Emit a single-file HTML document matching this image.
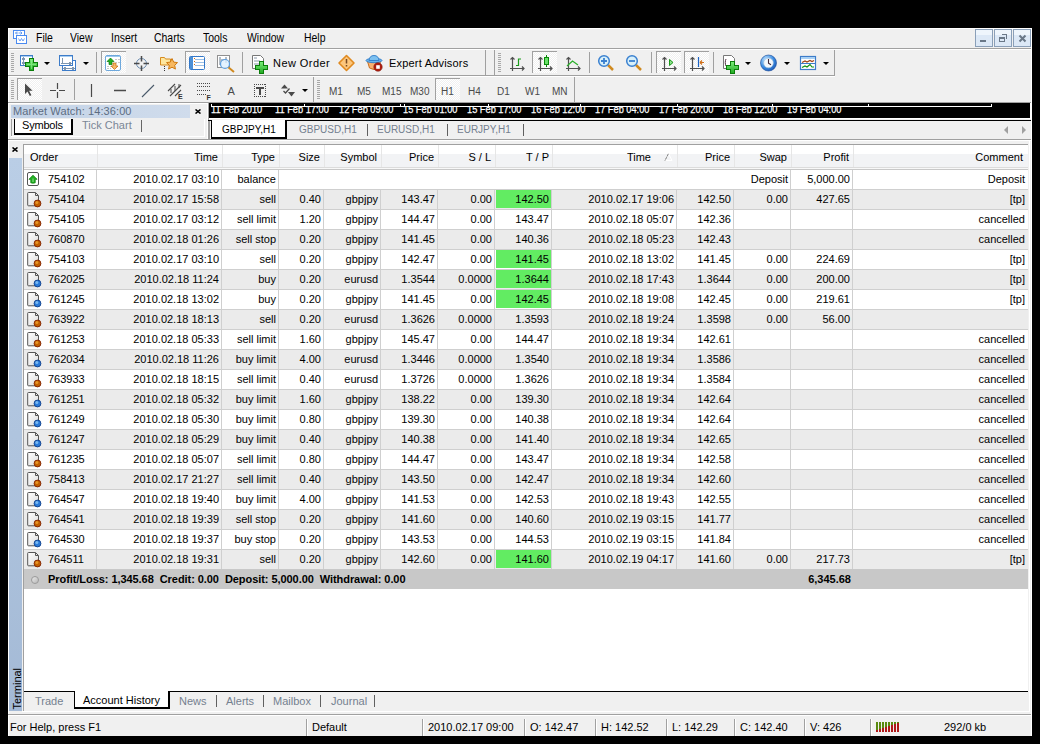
<!DOCTYPE html>
<html><head><meta charset="utf-8"><style>
*{margin:0;padding:0;box-sizing:border-box}
html,body{width:1040px;height:744px;overflow:hidden;background:#000}
body{position:relative;font-family:"Liberation Sans",sans-serif;font-size:11px;color:#000}
.a{position:absolute}
#win{position:absolute;left:8px;top:28px;width:1024px;height:708px;background:#f0f0f0}
.hl{position:absolute;height:1px}
.vline{position:absolute;width:1px}
.t{position:absolute;white-space:pre;line-height:13px}
.menu{top:28px;font-size:12px;line-height:20px;transform:scaleX(0.87);transform-origin:0 0}
.tb{position:absolute;border-right:1px solid #a0a0a0;border-bottom:1px solid #a0a0a0;}
.grip{position:absolute;width:4px;background:repeating-linear-gradient(#a8a8a8 0 1px,transparent 1px 2px)}
.sep{position:absolute;width:1px;background:#a0a0a0;border-right:1px solid #fff;width:2px}
.press{position:absolute;border:1px solid #b4b4b4;border-right-color:#fff;border-bottom-color:#fff;background:#f8f8f8}
.dd{position:absolute;width:0;height:0;border-left:3px solid transparent;border-right:3px solid transparent;border-top:3px solid #000}
.per{position:absolute;top:85px;color:#4a4a4a;white-space:pre;line-height:13px;font-size:10px}
#tbl{position:absolute;left:23px;top:144px;width:1005px;height:547px;background:#fff;border:1px solid #a0a0a0;border-right:none;border-bottom:none}
.hdr{position:absolute;left:0;top:0;width:1004px;height:25px;background:linear-gradient(#ffffff 0,#ffffff 9px,#f2f3f5 9px,#f2f3f5 22px,#dcdcdc 22px,#dcdcdc 23px,#f8f8f8 23px,#f8f8f8 24px,#c8c8c8 24px)}
.hc{position:absolute;top:0;height:22px;line-height:25px;text-align:right;padding-right:5px;white-space:pre}
.hs{border-left:1px solid #e6e6e6}
.sortar{display:inline-block;width:17px;padding-left:7px;vertical-align:-1px}
.row{position:absolute;left:0;width:1004px;height:20px;border-bottom:1px solid #cfcfcf}
.row.w{background:#fff}
.row.g{background:#ebebeb}
.c{position:absolute;top:0;height:19px;line-height:19px;text-align:right;white-space:pre}
.vl{position:absolute;top:0;width:1px;height:19px;background:#cfcfcf}
.grn{position:absolute;top:0;height:18px;background:#62ec62}
.ic{position:absolute;left:4px;top:2px;width:12px;height:14px}
.ic.up{border:1px solid #7a7a7a;border-radius:1px;background:#fff}
.ic.up svg{position:absolute;left:-1px;top:-1px}
.ic.doc{background:#fff;border:1px solid #6a6a6a;border-top-right-radius:3px}
.dot{position:absolute;left:6px;top:7px;width:8px;height:8px;border-radius:50%}
.sum{position:absolute;left:0;width:1004px;height:20px;background:#c8c8c8;font-weight:bold}
.st{position:absolute;top:0;line-height:20px;white-space:pre}
.sic{position:absolute;left:7px;top:7px;width:8px;height:8px;border:1px solid #9a9a9a;border-radius:50%;background:linear-gradient(135deg,#e8e8e8,#b8b8b8)}
.tl{position:absolute;top:0;color:#fff;-webkit-text-stroke:0.25px #fff;white-space:pre;font-size:11px;line-height:13px;transform:scaleX(0.84);transform-origin:0 0}

</style></head><body>
<div id="win"></div>
<svg class="a" style="left:0;top:0" width="1040" height="744" viewBox="0 0 1040 744">
<defs>
<pattern id="chk" width="2" height="2" patternUnits="userSpaceOnUse"><rect width="2" height="2" fill="#f0f0f0"/><rect width="1" height="1" fill="#fff"/><rect x="1" y="1" width="1" height="1" fill="#fff"/></pattern>
<linearGradient id="gplus" x1="0" y1="0" x2="0" y2="1"><stop offset="0" stop-color="#7df07d"/><stop offset="1" stop-color="#1fa81f"/></linearGradient>
<linearGradient id="mdib" x1="0" y1="0" x2="0" y2="1"><stop offset="0" stop-color="#eef5fc"/><stop offset="0.3" stop-color="#eef5fc"/><stop offset="0.31" stop-color="#dce8f6"/><stop offset="1" stop-color="#dce8f6"/></linearGradient>
<linearGradient id="mwg" x1="0" y1="0" x2="1" y2="0"><stop offset="0" stop-color="#c4d4e8"/><stop offset="1" stop-color="#d2deed"/></linearGradient>
</defs>
<!-- window top white line -->
<rect x="8" y="28" width="1024" height="1" fill="#fff"/>
<rect x="8" y="28" width="1" height="708" fill="#fff"/>
<!-- menu icon -->
<g fill="none" stroke="#4a8af0" stroke-width="1" shape-rendering="crispEdges">
<rect x="13.5" y="30.5" width="11" height="8" fill="#fff"/>
<rect x="16.5" y="35.5" width="10" height="8" fill="#fff"/>
<path d="M18.5 38.5 l1.5 2.5 l1.5 -2.5 l1.5 2.5 l1.5 -2.5" stroke-width="0.8" shape-rendering="auto"/>
<path d="M15.5 33 l1.5 -1.5 M15.5 33 l1.5 1.5 M15.5 33h3M22 33l-1.5 -1.5M22 33l-1.5 1.5M22 33h-3" stroke-width="0.8" shape-rendering="auto"/>
</g>
<!-- MDI buttons -->
<g shape-rendering="crispEdges">
<rect x="975.5" y="29.5" width="17" height="17" fill="url(#mdib)" stroke="#8a9fb8"/>
<rect x="994.5" y="29.5" width="17" height="17" fill="url(#mdib)" stroke="#8a9fb8"/>
<rect x="1013.5" y="29.5" width="17" height="17" fill="url(#mdib)" stroke="#8a9fb8"/>
<rect x="980" y="40" width="6" height="2" fill="#6a7888"/>
<rect x="999.5" y="37.5" width="5" height="4" fill="none" stroke="#6a7888"/>
<rect x="999" y="37" width="6" height="2" fill="#6a7888"/>
<path d="M1002 34.5 h4.5 v4" fill="none" stroke="#6a7888"/>
<rect x="1002" y="34" width="5" height="1" fill="#6a7888"/>
</g>
<path d="M1019.5 35.5 l6 6 M1025.5 35.5 l-6 6" stroke="#6a7888" stroke-width="2"/>
<!-- pressed buttons -->
<g shape-rendering="crispEdges">
<rect x="101" y="51" width="25" height="22" fill="url(#chk)"/>
<path d="M101.5 73 V51.5 H126" stroke="#a0a0a0" fill="none"/>
<rect x="185" y="51" width="25" height="22" fill="url(#chk)"/>
<path d="M185.5 73 V51.5 H210" stroke="#a0a0a0" fill="none"/>
<rect x="532" y="51" width="25" height="22" fill="url(#chk)"/>
<path d="M532.5 73 V51.5 H557" stroke="#a0a0a0" fill="none"/>
<rect x="656" y="51" width="25" height="22" fill="url(#chk)"/>
<path d="M656.5 73 V51.5 H681" stroke="#a0a0a0" fill="none"/>
<rect x="684" y="51" width="25" height="22" fill="url(#chk)"/>
<path d="M684.5 73 V51.5 H709" stroke="#a0a0a0" fill="none"/>
<rect x="17" y="78" width="25" height="22" fill="url(#chk)"/>
<path d="M17.5 100 V78.5 H42" stroke="#a0a0a0" fill="none"/>
<rect x="435" y="78" width="25" height="22" fill="url(#chk)"/>
<path d="M435.5 100 V78.5 H460" stroke="#a0a0a0" fill="none"/>
</g>
<!-- separators tb1 -->
<g fill="#a0a0a0" shape-rendering="crispEdges">
<rect x="96" y="52" width="1" height="21"/><rect x="242" y="52" width="1" height="21"/>
<rect x="589" y="52" width="1" height="21"/><rect x="651" y="52" width="1" height="21"/><rect x="713" y="52" width="1" height="21"/>
<rect x="74" y="79" width="1" height="21"/>
</g>
<!-- grippers -->
<g fill="#a8a8a8" shape-rendering="crispEdges">
<path d="M11 53h3v1h-3zM11 55h3v1h-3zM11 57h3v1h-3zM11 59h3v1h-3zM11 61h3v1h-3zM11 63h3v1h-3zM11 65h3v1h-3zM11 67h3v1h-3zM11 69h3v1h-3zM11 71h3v1h-3z"/>
<path d="M498 53h3v1h-3zM498 55h3v1h-3zM498 57h3v1h-3zM498 59h3v1h-3zM498 61h3v1h-3zM498 63h3v1h-3zM498 65h3v1h-3zM498 67h3v1h-3zM498 69h3v1h-3zM498 71h3v1h-3z"/>
<path d="M11 80h3v1h-3zM11 82h3v1h-3zM11 84h3v1h-3zM11 86h3v1h-3zM11 88h3v1h-3zM11 90h3v1h-3zM11 92h3v1h-3zM11 94h3v1h-3zM11 96h3v1h-3zM11 98h3v1h-3z"/>
<path d="M317 80h3v1h-3zM317 82h3v1h-3zM317 84h3v1h-3zM317 86h3v1h-3zM317 88h3v1h-3zM317 90h3v1h-3zM317 92h3v1h-3zM317 94h3v1h-3zM317 96h3v1h-3zM317 98h3v1h-3z"/>
</g>
<!-- dropdown arrows -->
<g fill="#000">
<path d="M44 62h6l-3 3z"/><path d="M83 62h6l-3 3z"/><path d="M745 62h6l-3 3z"/><path d="M784 62h6l-3 3z"/><path d="M823 62h6l-3 3z"/><path d="M302 89h6l-3 3z"/>
</g>
<!-- icon: new chart -->
<g shape-rendering="crispEdges">
<rect x="20.5" y="55.5" width="12" height="10" fill="#fff" stroke="#3d7cc9"/>
<rect x="21" y="56" width="11" height="1" fill="#a8cdf0"/>
<path d="M23.5 58v6M22 59.5l1.5 -1.5 1.5 1.5M22 62.5l1.5 1.5 1.5 -1.5" stroke="#7f97b0" fill="none"/>
</g>
<path d="M29.5 58.5h4v4h4v4h-4v4h-4v-4h-4v-4h4z" fill="url(#gplus)" stroke="#0a7d0a" shape-rendering="crispEdges"/><path d="M31.5 60v9M27 64.5h9" stroke="#9af59a" stroke-width="1" opacity="0.6"/>
<!-- icon: profiles -->
<g shape-rendering="crispEdges">
<rect x="62.5" y="60.5" width="13" height="10" fill="#fff" stroke="#3d7cc9"/>
<rect x="59.5" y="55.5" width="13" height="10" fill="#fff" stroke="#3d7cc9"/>
<rect x="60" y="56" width="12" height="1" fill="#a8cdf0"/>
<path d="M61 63.5h10M62.5 58v5M64 68.5h10M69.5 62l1.5 1.5 -1.5 1.5M65.5 67l-1.5 1.5 1.5 1.5M72.5 67l1.5 1.5 -1.5 1.5" stroke="#7f97b0" fill="none"/>
</g>
<!-- icon: market watch -->
<rect x="105.5" y="55.5" width="15" height="15" rx="1.5" fill="#fff" stroke="#6ea8dc"/>
<rect x="106" y="56" width="14" height="1" fill="#9cc8ee"/>
<path d="M110.5 58l3.5 3.5h-2v3h-3v-3h-2z" fill="#22b022" stroke="#0a7a0a" stroke-width="0.7"/>
<path d="M114.5 69.5l3.5 -3.5h-2v-3h-3v3h-2z" fill="#f6b866" stroke="#c0680a" stroke-width="0.7"/>
<path d="M115 59.5h5M115 62.5h5M107 66.5h4M107 68.5h4" stroke="#c8c8c8" stroke-width="1" stroke-dasharray="2 1"/>
<!-- crosshair -->
<circle cx="141.5" cy="63.5" r="5" fill="none" stroke="#6d8db0" stroke-width="1"/>
<path d="M134 63.5h5.5M143.5 63.5h5.5M141.5 56v5.5M141.5 65.5v5.5" stroke="#4a4a4a" stroke-width="1.5"/>
<!-- folder star -->
<path d="M160.5 57.5h4l1 1.5h5v6h-10z" fill="#fde7a0" stroke="#d68a1e"/>
<path d="M172 58.5l1.7 3.6 3.8 .5 -2.8 2.7 .7 3.8 -3.4 -1.9 -3.4 1.9 .7 -3.8 -2.8 -2.7 3.8 -.5z" fill="#f7b860" stroke="#d07a10"/>
<path d="M164.5 66v1M164.5 68v1M164.5 70v1" stroke="#333"/>
<!-- terminal icon -->
<rect x="189.5" y="56.5" width="15" height="13" rx="1" fill="#fff" stroke="#3478c8"/>
<rect x="190" y="57" width="3" height="12" fill="#4d90d6"/>
<path d="M195 59.5h9M195 62.5h9M195 65.5h9" stroke="#9cc0e6"/>
<path d="M194 58.5h1M194 61.5h1M194 64.5h1" stroke="#d06a10"/>
<!-- tester -->
<rect x="217.5" y="55.5" width="12" height="12" fill="#fff" stroke="#909090"/>
<path d="M220 57v8M221 60h3M226 57v6" stroke="#6a7a8a"/>
<path d="M228 67l6 5" stroke="#d08a20" stroke-width="2"/>
<circle cx="225" cy="64" r="4.5" fill="#dcefff" fill-opacity="0.8" stroke="#5a9ee0" stroke-width="1.2"/>
<!-- new order -->
<path d="M252.5 55.5h8l3 3v10h-11z" fill="#fff" stroke="#777"/>
<path d="M254 58h3M254 61h6M254 64h6" stroke="#8a98a8"/>
<path d="M259.5 61.5h4v4h4v4h-4v4h-4v-4h-4v-4h4z" fill="url(#gplus)" stroke="#0a7d0a" shape-rendering="crispEdges"/>
<!-- warning diamond -->
<path d="M346.5 55.5l7.5 7.5 -7.5 7.5 -7.5 -7.5z" fill="#fcc67c" stroke="#e08a20" stroke-width="1.6" stroke-linejoin="round"/>
<path d="M346.5 59v4.5M346.5 65v1.5" stroke="#7a4a20" stroke-width="1.5"/>
<!-- expert advisors -->
<path d="M367.5 61.5h13l-2 6.5q-4.5 3 -9 0z" fill="#f8b070" stroke="#c87020"/>
<ellipse cx="374" cy="60.5" rx="8" ry="2.2" fill="#6ab4ec" stroke="#2f7cc8" stroke-width="0.9"/>
<path d="M369 60.5q0.5 -5 5 -5 q4.5 0 5 5z" fill="#7cc0f0" stroke="#2f7cc8" stroke-width="0.9"/>
<circle cx="378" cy="67" r="4.2" fill="#b02010" stroke="#801008" stroke-width="0.6"/>
<rect x="376.2" y="65.2" width="3.6" height="3.6" fill="#fff"/>
<!-- bar chart -->
<g fill="none" stroke="#505050" stroke-width="1.2"><path d="M512.5 57.5V71M510 68.5H524"/><path d="M510.5 59.5l2 -2 2 2M522 66.5l2 2 -2 2"/><path d="M540.5 57.5V71M538 68.5H552"/><path d="M538.5 59.5l2 -2 2 2M550 66.5l2 2 -2 2"/><path d="M568.5 57.5V71M566 68.5H580"/><path d="M566.5 59.5l2 -2 2 2M578 66.5l2 2 -2 2"/><path d="M664.5 57.5V71M662 68.5H676"/><path d="M662.5 59.5l2 -2 2 2M674 66.5l2 2 -2 2"/><path d="M692.5 57.5V71M690 68.5H704"/><path d="M690.5 59.5l2 -2 2 2M702 66.5l2 2 -2 2"/></g>
<path d="M518.5 58.5v7.5M518.5 59h2.5M516 65.5h2.5" stroke="#1a9a1a" stroke-width="1.2" fill="none"/>
<rect x="544.5" y="57.5" width="4" height="7" fill="#6ae06a" stroke="#0a8a0a"/>
<path d="M546.5 55v2.5M546.5 64.5v2.5" stroke="#0a8a0a"/>
<path d="M567 66l5.5 -5 5.5 4" fill="none" stroke="#2ab02a" stroke-width="1.2"/>
<!-- zoom -->
<path d="M608 65l5 5" stroke="#d08a20" stroke-width="2.5"/>
<circle cx="604" cy="61" r="5.3" fill="#d8f0fa" stroke="#3a80d0" stroke-width="1.5"/>
<path d="M601 61h6M604 58v6" stroke="#3a80d0" stroke-width="1.8"/>
<path d="M636 65l5 5" stroke="#d08a20" stroke-width="2.5"/>
<circle cx="632" cy="61" r="5.3" fill="#d8f0fa" stroke="#3a80d0" stroke-width="1.5"/>
<path d="M629 61h6" stroke="#3a80d0" stroke-width="1.8"/>
<path d="M669.5 59.5l3.5 3 -3.5 3z" fill="#8ae08a" stroke="#1a9a1a"/>
<path d="M698.5 57v10" stroke="#1a64c8" stroke-width="1.2"/>
<path d="M700 62.5h4M700 62.5l2 -2M700 62.5l2 2" stroke="#d0701a" stroke-width="1.2"/>
<!-- indicators -->
<path d="M723.5 55.5h8l3 3v10h-11z" fill="#fff" stroke="#777"/>
<path d="M726 59c-1 2 -1 5 0 7" stroke="#503040" fill="none"/>
<path d="M730.5 61.5h4v4h4v4h-4v4h-4v-4h-4v-4h4z" fill="url(#gplus)" stroke="#0a7d0a" shape-rendering="crispEdges"/>
<!-- clock -->
<defs><radialGradient id="clk" cx="0.35" cy="0.3" r="0.8"><stop offset="0" stop-color="#bfe4ff"/><stop offset="0.6" stop-color="#3a8ae0"/><stop offset="1" stop-color="#1a54b0"/></radialGradient></defs>
<circle cx="768.5" cy="63" r="8" fill="url(#clk)" stroke="#1a4a98" stroke-width="0.6"/>
<circle cx="768.5" cy="63" r="4.8" fill="#f4f8fc" stroke="#a8c0d8" stroke-width="0.6"/>
<path d="M768.5 59v4.2l2.5 1.5" stroke="#402838" stroke-width="1.1" fill="none"/>
<!-- template -->
<rect x="800.5" y="56.5" width="15" height="13" fill="#fff" stroke="#3d7cc9" stroke-width="1.2"/>
<rect x="801" y="57" width="14" height="2" fill="#a8d0f4"/>
<path d="M801 63.5h14" stroke="#3d7cc9"/>
<path d="M802 62.5l3 -1.5 2 1 3 -1.5 2 1 2 -1" stroke="#a04010" stroke-width="1.2" fill="none"/>
<path d="M802 67.5l3 -1.5 2 1 3 -2.5 2 2.5 2 0" stroke="#109010" stroke-width="1.2" fill="none"/>
<!-- row2 tools -->
<path d="M25 83.5v10.5l2.5 -2.5 2.3 4.5 1.6 -.8 -2.3 -4.5h3.5z" fill="#4a4a4a"/>
<path d="M50 90.5h6M59 90.5h6M57.5 83v6M57.5 92v6" stroke="#4a4a4a" stroke-width="1.2"/>
<path d="M91.5 84v13" stroke="#4a4a4a" stroke-width="1.2"/>
<path d="M114 90.5h12" stroke="#4a4a4a" stroke-width="1.5"/>
<path d="M142 97l12 -12" stroke="#4a5a6a" stroke-width="1.1"/>
<path d="M168 91l7 -7M170 96l11 -11M175 96l6 -6" stroke="#4a4a4a" stroke-width="1.1"/>
<path d="M171 89v4M175 86v5M179 84v4" stroke="#4a4a4a" stroke-width="1"/>
<text x="178" y="99" font-family="Liberation Sans" font-size="7" font-weight="bold" fill="#333">E</text>
<g stroke="#4a4a4a" stroke-dasharray="1 1" stroke-width="1" shape-rendering="crispEdges">
<path d="M197 83.5h13M197 86.5h13M197 90.5h13M197 94.5h9"/>
<path d="M254 84.5h12M254 96.5h12M254.5 84v13M265.5 84v13"/>
</g>
<text x="206.5" y="99.5" font-family="Liberation Sans" font-size="7" font-weight="bold" fill="#333">F</text>
<text x="227.5" y="95" font-family="Liberation Sans" font-size="11" fill="#4a4a4a">A</text>
<path d="M256 88h8M260 88v7" stroke="#4a4a4a" stroke-width="2"/>
<path d="M281 88.5l3.5 -4 3.5 4z" fill="#4a4a4a"/>
<path d="M283.5 91l2 2 4 -4.5" fill="none" stroke="#4a4a4a" stroke-width="1.3"/>
<path d="M288 92h7l-3.5 4.5z" fill="#4a4a4a"/>
</svg>

<!-- menu bar -->
<div class="t menu" style="left:36px">File</div>
<div class="t menu" style="left:70px">View</div>
<div class="t menu" style="left:111px">Insert</div>
<div class="t menu" style="left:154px">Charts</div>
<div class="t menu" style="left:203px">Tools</div>
<div class="t menu" style="left:247px">Window</div>
<div class="t menu" style="left:304px">Help</div>
<div class="hl" style="left:8px;top:48px;width:1024px;background:#a0a0a0"></div>
<div class="hl" style="left:8px;top:49px;width:1024px;background:#fff"></div>
<!-- toolbar row 1 -->
<div class="hl" style="left:8px;top:75px;width:827px;background:#a0a0a0"></div>
<div class="hl" style="left:8px;top:76px;width:827px;background:#fff"></div>
<div class="vline" style="left:485px;top:50px;height:25px;background:#a0a0a0"></div>
<div class="vline" style="left:494px;top:50px;height:25px;background:#a0a0a0"></div>
<div class="vline" style="left:834px;top:50px;height:25px;background:#a0a0a0"></div>
<div class="t" style="left:273px;top:57px;letter-spacing:0.45px">New Order</div>
<div class="t" style="left:389px;top:57px;letter-spacing:0.2px">Expert Advisors</div>
<!-- toolbar row 2 -->
<div class="hl" style="left:8px;top:102px;width:1024px;background:#a0a0a0"></div>
<div class="vline" style="left:313px;top:77px;height:25px;background:#a0a0a0"></div>
<div class="vline" style="left:574px;top:77px;height:25px;background:#a0a0a0"></div>
<div class="per" style="left:329px">M1</div>
<div class="per" style="left:357px">M5</div>
<div class="per" style="left:382px">M15</div>
<div class="per" style="left:410px">M30</div>
<div class="per" style="left:441px">H1</div>
<div class="per" style="left:468px">H4</div>
<div class="per" style="left:497px">D1</div>
<div class="per" style="left:525px">W1</div>
<div class="per" style="left:552px">MN</div>
<!-- market watch -->
<div class="a" style="left:11px;top:105px;width:179px;height:13px;background:linear-gradient(90deg,#c3d3e7,#d0dcec)"></div>
<div class="t" style="left:13px;top:105px;letter-spacing:0.1px;color:#5d6d82">Market Watch: 14:36:00</div>
<div class="vline" style="left:11px;top:119px;height:17px;background:#a0a0a0"></div>
<div class="vline" style="left:204px;top:119px;height:17px;background:#fff"></div>
<div class="hl" style="left:11px;top:136px;width:194px;background:#fff"></div>
<div class="hl" style="left:8px;top:103px;width:200px;background:#fff"></div>
<div class="vline" style="left:207px;top:103px;height:36px;background:#fff"></div>
<div class="vline" style="left:208px;top:103px;height:36px;background:#a0a0a0"></div>
<svg class="a" style="left:195px;top:109px" width="6" height="5"><path d="M.5 .5l5 4M5.5 .5l-5 4" stroke="#000" stroke-width="1.6"/></svg>
<div class="a" style="left:14px;top:119px;width:59px;height:16px;background:#fff;border:1px solid #000;border-top:none;border-right-width:2px;border-bottom-width:2px"></div>
<div class="t" style="left:22px;top:119px;letter-spacing:-0.2px">Symbols</div>
<div class="t" style="left:82px;top:119px;color:#7a8696">Tick Chart</div>
<div class="vline" style="left:141px;top:120px;height:12px;background:#666"></div>
<!-- timeline -->
<div class="a" style="left:209px;top:103px;width:821px;height:15px;background:#000;overflow:hidden">
<div class="tl" style="left:2px">11 Feb 2010</div>
<div class="tl" style="left:66px">11 Feb 17:00</div>
<div class="tl" style="left:130px">12 Feb 09:00</div>
<div class="tl" style="left:194px">15 Feb 01:00</div>
<div class="tl" style="left:258px">15 Feb 17:00</div>
<div class="tl" style="left:322px">16 Feb 12:00</div>
<div class="tl" style="left:386px">17 Feb 04:00</div>
<div class="tl" style="left:450px">17 Feb 20:00</div>
<div class="tl" style="left:514px">18 Feb 12:00</div>
<div class="tl" style="left:578px">19 Feb 04:00</div>
<div class="a" style="left:0;top:0;width:821px;height:3px;background:#000"></div>
</div>
<div class="hl" style="left:211px;top:106px;width:781px;background:#fff"></div>
<svg class="a" style="left:0;top:0" width="1040" height="120"><g fill="#fff" shape-rendering="crispEdges">
<rect x="211" y="104" width="1" height="2"/><rect x="304" y="104" width="1" height="2"/><rect x="400" y="104" width="1" height="2"/><rect x="404" y="104" width="1" height="2"/><rect x="488" y="104" width="1" height="2"/><rect x="580" y="104" width="1" height="2"/><rect x="677" y="104" width="1" height="2"/><rect x="772" y="104" width="1" height="2"/><rect x="868" y="104" width="1" height="2"/><rect x="991" y="104" width="1" height="2"/>
</g></svg>
<div class="hl" style="left:209px;top:118px;width:822px;background:#fff"></div>
<div class="vline" style="left:1030px;top:103px;height:16px;background:#fff"></div>
<!-- chart tabs -->
<div class="hl" style="left:209px;top:119px;width:822px;background:#f0f0f0"></div>
<div class="hl" style="left:285px;top:120px;width:746px;background:#000"></div>
<div class="vline" style="left:209px;top:120px;height:19px;background:#a0a0a0"></div>
<div class="a" style="left:211px;top:120px;width:76px;height:19px;background:#fff;border:1px solid #000;border-top:none;border-left-width:1px;border-right-width:2px;border-bottom-width:2px"></div>
<div class="hl" style="left:208px;top:120px;width:4px;background:#000"></div>
<div class="t" style="left:222px;top:123px;font-size:10px">GBPJPY,H1</div>
<div class="t" style="left:299px;top:123px;font-size:10px;color:#74808f">GBPUSD,H1</div>
<div class="vline" style="left:367px;top:124px;height:12px;background:#606060"></div>
<div class="t" style="left:377px;top:123px;font-size:10px;color:#74808f">EURUSD,H1</div>
<div class="vline" style="left:447px;top:124px;height:12px;background:#606060"></div>
<div class="t" style="left:457px;top:123px;font-size:10px;color:#74808f">EURJPY,H1</div>
<div class="vline" style="left:523px;top:124px;height:12px;background:#606060"></div>
<svg class="a" style="left:1000px;top:124px" width="30" height="12"><path d="M8 2v8l-4 -4z" fill="#a0a0a0"/><path d="M22 2v8l4 -4z" fill="#a0a0a0"/></svg>
<div class="hl" style="left:8px;top:139px;width:1024px;background:#a0a0a0"></div>
<div class="hl" style="left:8px;top:140px;width:1024px;background:#fff"></div>
<!-- terminal -->
<svg class="a" style="left:12px;top:147px" width="6" height="5"><path d="M.5 .5l5 4M5.5 .5l-5 4" stroke="#000" stroke-width="1.6"/></svg>
<div class="a" style="left:9px;top:158px;width:13px;height:553px;background:linear-gradient(#bacee6,#a4bad6)"></div>
<div class="t" style="left:-4px;top:682px;width:42px;transform:rotate(-90deg);transform-origin:21px 6.5px;color:#000">Terminal</div>
<div id="tbl">
<div class="hdr">
<div class="hc" style="left:0px;width:73px;text-align:left"><span style="padding-left:6px">Order</span></div>
<div class="hc hs" style="left:73px;width:125px;padding-right:4px">Time</div>
<div class="hc hs" style="left:198px;width:57px;padding-right:4px">Type</div>
<div class="hc hs" style="left:255px;width:45px;padding-right:4px">Size</div>
<div class="hc hs" style="left:300px;width:57px;padding-right:4px">Symbol</div>
<div class="hc hs" style="left:357px;width:57px;padding-right:4px">Price</div>
<div class="hc hs" style="left:414px;width:57px;padding-right:4px">S / L</div>
<div class="hc hs" style="left:471px;width:57px;padding-right:3px">T / P</div>
<div class="hc hs" style="left:528px;width:125px;padding-right:26px">Time<svg class="a" style="left:111px;top:7px" width="10" height="9" viewBox="0 0 10 9"><path d="M1 8.5 L4.5 1.5 L8 8.5 Z" fill="none" stroke="#fff" stroke-width="1"/><path d="M1 8.5 L4.5 1.5" stroke="#555" stroke-width="1" stroke-dasharray="1 0.6"/></svg></div>
<div class="hc hs" style="left:653px;width:57px;padding-right:4px">Price</div>
<div class="hc hs" style="left:710px;width:57px;padding-right:4px">Swap</div>
<div class="hc hs" style="left:767px;width:62px;padding-right:4px">Profit</div>
<div class="hc hs" style="left:829px;width:176px;padding-right:6px">Comment</div>
</div>
<div class="row w" style="top:25px">
<svg class="a" style="left:3px;top:2px" width="13" height="15" viewBox="0 0 13 15"><rect x="0.5" y="0.5" width="11" height="13" rx="1.5" fill="#fff" stroke="#555"/><path d="M6 3.2 L10 7.3 L8.2 7.3 L8.2 10.8 Q6 11.6 3.8 10.8 L3.8 7.3 L2 7.3 Z" fill="#22b022" stroke="#0a800a" stroke-width="0.8"/><path d="M6 6.5v3.5" stroke="#8ee08e" stroke-width="1"/></svg>
<div class="c" style="left:24px;text-align:left">754102</div>
<div class="vl" style="left:72px"></div>
<div class="vl" style="left:197px"></div>
<div class="c" style="left:72px;width:123px">2010.02.17 03:10</div>
<div class="vl" style="left:254px"></div>
<div class="c" style="left:197px;width:55px">balance</div>
<div class="vl" style="left:766px"></div>
<div class="c" style="left:709px;width:55px">Deposit</div>
<div class="vl" style="left:828px"></div>
<div class="c" style="left:766px;width:60px">5,000.00</div>
<div class="c" style="left:828px;width:173px">Deposit</div>
</div>
<div class="row g" style="top:45px">
<svg class="a" style="left:3px;top:2px" width="15" height="16" viewBox="0 0 15 16"><defs><linearGradient id="dg" x1="0" y1="0" x2="1" y2="1"><stop offset="0" stop-color="#fff"/><stop offset="1" stop-color="#dcdcdc"/></linearGradient></defs><path d="M1.5 .5h7l3 3v9.5a.8 .8 0 0 1 -.8 .8h-9.2a.8 .8 0 0 1 -.8 -.8v-11.7a.8 .8 0 0 1 .8 -.8z" fill="url(#dg)" stroke="#555"/><path d="M8.5 .8v2.7h2.7" fill="none" stroke="#555"/><circle cx="10.5" cy="11.5" r="3.4" fill="#c06000" stroke="#802000" stroke-width="0.9"/><circle cx="9.8" cy="10.6" r="1.5" fill="#f0a030" opacity="0.8"/></svg>
<div class="c" style="left:24px;text-align:left">754104</div>
<div class="vl" style="left:72px"></div>
<div class="vl" style="left:197px"></div>
<div class="c" style="left:72px;width:123px">2010.02.17 15:58</div>
<div class="vl" style="left:254px"></div>
<div class="c" style="left:197px;width:55px">sell</div>
<div class="vl" style="left:299px"></div>
<div class="c" style="left:254px;width:43px">0.40</div>
<div class="vl" style="left:356px"></div>
<div class="c" style="left:299px;width:55px">gbpjpy</div>
<div class="vl" style="left:413px"></div>
<div class="c" style="left:356px;width:55px">143.47</div>
<div class="vl" style="left:470px"></div>
<div class="c" style="left:413px;width:55px">0.00</div>
<div class="grn" style="left:472px;width:55px"></div>
<div class="vl" style="left:527px"></div>
<div class="c" style="left:470px;width:55px">142.50</div>
<div class="vl" style="left:652px"></div>
<div class="c" style="left:527px;width:123px">2010.02.17 19:06</div>
<div class="vl" style="left:709px"></div>
<div class="c" style="left:652px;width:55px">142.50</div>
<div class="vl" style="left:766px"></div>
<div class="c" style="left:709px;width:55px">0.00</div>
<div class="vl" style="left:828px"></div>
<div class="c" style="left:766px;width:60px">427.65</div>
<div class="c" style="left:828px;width:173px">[tp]</div>
</div>
<div class="row w" style="top:65px">
<svg class="a" style="left:3px;top:2px" width="15" height="16" viewBox="0 0 15 16"><defs><linearGradient id="dg" x1="0" y1="0" x2="1" y2="1"><stop offset="0" stop-color="#fff"/><stop offset="1" stop-color="#dcdcdc"/></linearGradient></defs><path d="M1.5 .5h7l3 3v9.5a.8 .8 0 0 1 -.8 .8h-9.2a.8 .8 0 0 1 -.8 -.8v-11.7a.8 .8 0 0 1 .8 -.8z" fill="url(#dg)" stroke="#555"/><path d="M8.5 .8v2.7h2.7" fill="none" stroke="#555"/><circle cx="10.5" cy="11.5" r="3.4" fill="#c06000" stroke="#802000" stroke-width="0.9"/><circle cx="9.8" cy="10.6" r="1.5" fill="#f0a030" opacity="0.8"/></svg>
<div class="c" style="left:24px;text-align:left">754105</div>
<div class="vl" style="left:72px"></div>
<div class="vl" style="left:197px"></div>
<div class="c" style="left:72px;width:123px">2010.02.17 03:12</div>
<div class="vl" style="left:254px"></div>
<div class="c" style="left:197px;width:55px">sell limit</div>
<div class="vl" style="left:299px"></div>
<div class="c" style="left:254px;width:43px">1.20</div>
<div class="vl" style="left:356px"></div>
<div class="c" style="left:299px;width:55px">gbpjpy</div>
<div class="vl" style="left:413px"></div>
<div class="c" style="left:356px;width:55px">144.47</div>
<div class="vl" style="left:470px"></div>
<div class="c" style="left:413px;width:55px">0.00</div>
<div class="vl" style="left:527px"></div>
<div class="c" style="left:470px;width:55px">143.47</div>
<div class="vl" style="left:652px"></div>
<div class="c" style="left:527px;width:123px">2010.02.18 05:07</div>
<div class="vl" style="left:709px"></div>
<div class="c" style="left:652px;width:55px">142.36</div>
<div class="vl" style="left:766px"></div>
<div class="vl" style="left:828px"></div>
<div class="c" style="left:828px;width:173px">cancelled</div>
</div>
<div class="row g" style="top:85px">
<svg class="a" style="left:3px;top:2px" width="15" height="16" viewBox="0 0 15 16"><defs><linearGradient id="dg" x1="0" y1="0" x2="1" y2="1"><stop offset="0" stop-color="#fff"/><stop offset="1" stop-color="#dcdcdc"/></linearGradient></defs><path d="M1.5 .5h7l3 3v9.5a.8 .8 0 0 1 -.8 .8h-9.2a.8 .8 0 0 1 -.8 -.8v-11.7a.8 .8 0 0 1 .8 -.8z" fill="url(#dg)" stroke="#555"/><path d="M8.5 .8v2.7h2.7" fill="none" stroke="#555"/><circle cx="10.5" cy="11.5" r="3.4" fill="#c06000" stroke="#802000" stroke-width="0.9"/><circle cx="9.8" cy="10.6" r="1.5" fill="#f0a030" opacity="0.8"/></svg>
<div class="c" style="left:24px;text-align:left">760870</div>
<div class="vl" style="left:72px"></div>
<div class="vl" style="left:197px"></div>
<div class="c" style="left:72px;width:123px">2010.02.18 01:26</div>
<div class="vl" style="left:254px"></div>
<div class="c" style="left:197px;width:55px">sell stop</div>
<div class="vl" style="left:299px"></div>
<div class="c" style="left:254px;width:43px">0.20</div>
<div class="vl" style="left:356px"></div>
<div class="c" style="left:299px;width:55px">gbpjpy</div>
<div class="vl" style="left:413px"></div>
<div class="c" style="left:356px;width:55px">141.45</div>
<div class="vl" style="left:470px"></div>
<div class="c" style="left:413px;width:55px">0.00</div>
<div class="vl" style="left:527px"></div>
<div class="c" style="left:470px;width:55px">140.36</div>
<div class="vl" style="left:652px"></div>
<div class="c" style="left:527px;width:123px">2010.02.18 05:23</div>
<div class="vl" style="left:709px"></div>
<div class="c" style="left:652px;width:55px">142.43</div>
<div class="vl" style="left:766px"></div>
<div class="vl" style="left:828px"></div>
<div class="c" style="left:828px;width:173px">cancelled</div>
</div>
<div class="row w" style="top:105px">
<svg class="a" style="left:3px;top:2px" width="15" height="16" viewBox="0 0 15 16"><defs><linearGradient id="dg" x1="0" y1="0" x2="1" y2="1"><stop offset="0" stop-color="#fff"/><stop offset="1" stop-color="#dcdcdc"/></linearGradient></defs><path d="M1.5 .5h7l3 3v9.5a.8 .8 0 0 1 -.8 .8h-9.2a.8 .8 0 0 1 -.8 -.8v-11.7a.8 .8 0 0 1 .8 -.8z" fill="url(#dg)" stroke="#555"/><path d="M8.5 .8v2.7h2.7" fill="none" stroke="#555"/><circle cx="10.5" cy="11.5" r="3.4" fill="#c06000" stroke="#802000" stroke-width="0.9"/><circle cx="9.8" cy="10.6" r="1.5" fill="#f0a030" opacity="0.8"/></svg>
<div class="c" style="left:24px;text-align:left">754103</div>
<div class="vl" style="left:72px"></div>
<div class="vl" style="left:197px"></div>
<div class="c" style="left:72px;width:123px">2010.02.17 03:10</div>
<div class="vl" style="left:254px"></div>
<div class="c" style="left:197px;width:55px">sell</div>
<div class="vl" style="left:299px"></div>
<div class="c" style="left:254px;width:43px">0.20</div>
<div class="vl" style="left:356px"></div>
<div class="c" style="left:299px;width:55px">gbpjpy</div>
<div class="vl" style="left:413px"></div>
<div class="c" style="left:356px;width:55px">142.47</div>
<div class="vl" style="left:470px"></div>
<div class="c" style="left:413px;width:55px">0.00</div>
<div class="grn" style="left:472px;width:55px"></div>
<div class="vl" style="left:527px"></div>
<div class="c" style="left:470px;width:55px">141.45</div>
<div class="vl" style="left:652px"></div>
<div class="c" style="left:527px;width:123px">2010.02.18 13:02</div>
<div class="vl" style="left:709px"></div>
<div class="c" style="left:652px;width:55px">141.45</div>
<div class="vl" style="left:766px"></div>
<div class="c" style="left:709px;width:55px">0.00</div>
<div class="vl" style="left:828px"></div>
<div class="c" style="left:766px;width:60px">224.69</div>
<div class="c" style="left:828px;width:173px">[tp]</div>
</div>
<div class="row g" style="top:125px">
<svg class="a" style="left:3px;top:2px" width="15" height="16" viewBox="0 0 15 16"><defs><linearGradient id="dg" x1="0" y1="0" x2="1" y2="1"><stop offset="0" stop-color="#fff"/><stop offset="1" stop-color="#dcdcdc"/></linearGradient></defs><path d="M1.5 .5h7l3 3v9.5a.8 .8 0 0 1 -.8 .8h-9.2a.8 .8 0 0 1 -.8 -.8v-11.7a.8 .8 0 0 1 .8 -.8z" fill="url(#dg)" stroke="#555"/><path d="M8.5 .8v2.7h2.7" fill="none" stroke="#555"/><circle cx="10.5" cy="11.5" r="3.4" fill="#2a7ad8" stroke="#10408a" stroke-width="0.9"/><circle cx="9.8" cy="10.6" r="1.5" fill="#8cc8f8" opacity="0.8"/></svg>
<div class="c" style="left:24px;text-align:left">762025</div>
<div class="vl" style="left:72px"></div>
<div class="vl" style="left:197px"></div>
<div class="c" style="left:72px;width:123px">2010.02.18 11:24</div>
<div class="vl" style="left:254px"></div>
<div class="c" style="left:197px;width:55px">buy</div>
<div class="vl" style="left:299px"></div>
<div class="c" style="left:254px;width:43px">0.20</div>
<div class="vl" style="left:356px"></div>
<div class="c" style="left:299px;width:55px">eurusd</div>
<div class="vl" style="left:413px"></div>
<div class="c" style="left:356px;width:55px">1.3544</div>
<div class="vl" style="left:470px"></div>
<div class="c" style="left:413px;width:55px">0.0000</div>
<div class="grn" style="left:472px;width:55px"></div>
<div class="vl" style="left:527px"></div>
<div class="c" style="left:470px;width:55px">1.3644</div>
<div class="vl" style="left:652px"></div>
<div class="c" style="left:527px;width:123px">2010.02.18 17:43</div>
<div class="vl" style="left:709px"></div>
<div class="c" style="left:652px;width:55px">1.3644</div>
<div class="vl" style="left:766px"></div>
<div class="c" style="left:709px;width:55px">0.00</div>
<div class="vl" style="left:828px"></div>
<div class="c" style="left:766px;width:60px">200.00</div>
<div class="c" style="left:828px;width:173px">[tp]</div>
</div>
<div class="row w" style="top:145px">
<svg class="a" style="left:3px;top:2px" width="15" height="16" viewBox="0 0 15 16"><defs><linearGradient id="dg" x1="0" y1="0" x2="1" y2="1"><stop offset="0" stop-color="#fff"/><stop offset="1" stop-color="#dcdcdc"/></linearGradient></defs><path d="M1.5 .5h7l3 3v9.5a.8 .8 0 0 1 -.8 .8h-9.2a.8 .8 0 0 1 -.8 -.8v-11.7a.8 .8 0 0 1 .8 -.8z" fill="url(#dg)" stroke="#555"/><path d="M8.5 .8v2.7h2.7" fill="none" stroke="#555"/><circle cx="10.5" cy="11.5" r="3.4" fill="#2a7ad8" stroke="#10408a" stroke-width="0.9"/><circle cx="9.8" cy="10.6" r="1.5" fill="#8cc8f8" opacity="0.8"/></svg>
<div class="c" style="left:24px;text-align:left">761245</div>
<div class="vl" style="left:72px"></div>
<div class="vl" style="left:197px"></div>
<div class="c" style="left:72px;width:123px">2010.02.18 13:02</div>
<div class="vl" style="left:254px"></div>
<div class="c" style="left:197px;width:55px">buy</div>
<div class="vl" style="left:299px"></div>
<div class="c" style="left:254px;width:43px">0.20</div>
<div class="vl" style="left:356px"></div>
<div class="c" style="left:299px;width:55px">gbpjpy</div>
<div class="vl" style="left:413px"></div>
<div class="c" style="left:356px;width:55px">141.45</div>
<div class="vl" style="left:470px"></div>
<div class="c" style="left:413px;width:55px">0.00</div>
<div class="grn" style="left:472px;width:55px"></div>
<div class="vl" style="left:527px"></div>
<div class="c" style="left:470px;width:55px">142.45</div>
<div class="vl" style="left:652px"></div>
<div class="c" style="left:527px;width:123px">2010.02.18 19:08</div>
<div class="vl" style="left:709px"></div>
<div class="c" style="left:652px;width:55px">142.45</div>
<div class="vl" style="left:766px"></div>
<div class="c" style="left:709px;width:55px">0.00</div>
<div class="vl" style="left:828px"></div>
<div class="c" style="left:766px;width:60px">219.61</div>
<div class="c" style="left:828px;width:173px">[tp]</div>
</div>
<div class="row g" style="top:165px">
<svg class="a" style="left:3px;top:2px" width="15" height="16" viewBox="0 0 15 16"><defs><linearGradient id="dg" x1="0" y1="0" x2="1" y2="1"><stop offset="0" stop-color="#fff"/><stop offset="1" stop-color="#dcdcdc"/></linearGradient></defs><path d="M1.5 .5h7l3 3v9.5a.8 .8 0 0 1 -.8 .8h-9.2a.8 .8 0 0 1 -.8 -.8v-11.7a.8 .8 0 0 1 .8 -.8z" fill="url(#dg)" stroke="#555"/><path d="M8.5 .8v2.7h2.7" fill="none" stroke="#555"/><circle cx="10.5" cy="11.5" r="3.4" fill="#c06000" stroke="#802000" stroke-width="0.9"/><circle cx="9.8" cy="10.6" r="1.5" fill="#f0a030" opacity="0.8"/></svg>
<div class="c" style="left:24px;text-align:left">763922</div>
<div class="vl" style="left:72px"></div>
<div class="vl" style="left:197px"></div>
<div class="c" style="left:72px;width:123px">2010.02.18 18:13</div>
<div class="vl" style="left:254px"></div>
<div class="c" style="left:197px;width:55px">sell</div>
<div class="vl" style="left:299px"></div>
<div class="c" style="left:254px;width:43px">0.20</div>
<div class="vl" style="left:356px"></div>
<div class="c" style="left:299px;width:55px">eurusd</div>
<div class="vl" style="left:413px"></div>
<div class="c" style="left:356px;width:55px">1.3626</div>
<div class="vl" style="left:470px"></div>
<div class="c" style="left:413px;width:55px">0.0000</div>
<div class="vl" style="left:527px"></div>
<div class="c" style="left:470px;width:55px">1.3593</div>
<div class="vl" style="left:652px"></div>
<div class="c" style="left:527px;width:123px">2010.02.18 19:24</div>
<div class="vl" style="left:709px"></div>
<div class="c" style="left:652px;width:55px">1.3598</div>
<div class="vl" style="left:766px"></div>
<div class="c" style="left:709px;width:55px">0.00</div>
<div class="vl" style="left:828px"></div>
<div class="c" style="left:766px;width:60px">56.00</div>
</div>
<div class="row w" style="top:185px">
<svg class="a" style="left:3px;top:2px" width="15" height="16" viewBox="0 0 15 16"><defs><linearGradient id="dg" x1="0" y1="0" x2="1" y2="1"><stop offset="0" stop-color="#fff"/><stop offset="1" stop-color="#dcdcdc"/></linearGradient></defs><path d="M1.5 .5h7l3 3v9.5a.8 .8 0 0 1 -.8 .8h-9.2a.8 .8 0 0 1 -.8 -.8v-11.7a.8 .8 0 0 1 .8 -.8z" fill="url(#dg)" stroke="#555"/><path d="M8.5 .8v2.7h2.7" fill="none" stroke="#555"/><circle cx="10.5" cy="11.5" r="3.4" fill="#c06000" stroke="#802000" stroke-width="0.9"/><circle cx="9.8" cy="10.6" r="1.5" fill="#f0a030" opacity="0.8"/></svg>
<div class="c" style="left:24px;text-align:left">761253</div>
<div class="vl" style="left:72px"></div>
<div class="vl" style="left:197px"></div>
<div class="c" style="left:72px;width:123px">2010.02.18 05:33</div>
<div class="vl" style="left:254px"></div>
<div class="c" style="left:197px;width:55px">sell limit</div>
<div class="vl" style="left:299px"></div>
<div class="c" style="left:254px;width:43px">1.60</div>
<div class="vl" style="left:356px"></div>
<div class="c" style="left:299px;width:55px">gbpjpy</div>
<div class="vl" style="left:413px"></div>
<div class="c" style="left:356px;width:55px">145.47</div>
<div class="vl" style="left:470px"></div>
<div class="c" style="left:413px;width:55px">0.00</div>
<div class="vl" style="left:527px"></div>
<div class="c" style="left:470px;width:55px">144.47</div>
<div class="vl" style="left:652px"></div>
<div class="c" style="left:527px;width:123px">2010.02.18 19:34</div>
<div class="vl" style="left:709px"></div>
<div class="c" style="left:652px;width:55px">142.61</div>
<div class="vl" style="left:766px"></div>
<div class="vl" style="left:828px"></div>
<div class="c" style="left:828px;width:173px">cancelled</div>
</div>
<div class="row g" style="top:205px">
<svg class="a" style="left:3px;top:2px" width="15" height="16" viewBox="0 0 15 16"><defs><linearGradient id="dg" x1="0" y1="0" x2="1" y2="1"><stop offset="0" stop-color="#fff"/><stop offset="1" stop-color="#dcdcdc"/></linearGradient></defs><path d="M1.5 .5h7l3 3v9.5a.8 .8 0 0 1 -.8 .8h-9.2a.8 .8 0 0 1 -.8 -.8v-11.7a.8 .8 0 0 1 .8 -.8z" fill="url(#dg)" stroke="#555"/><path d="M8.5 .8v2.7h2.7" fill="none" stroke="#555"/><circle cx="10.5" cy="11.5" r="3.4" fill="#2a7ad8" stroke="#10408a" stroke-width="0.9"/><circle cx="9.8" cy="10.6" r="1.5" fill="#8cc8f8" opacity="0.8"/></svg>
<div class="c" style="left:24px;text-align:left">762034</div>
<div class="vl" style="left:72px"></div>
<div class="vl" style="left:197px"></div>
<div class="c" style="left:72px;width:123px">2010.02.18 11:26</div>
<div class="vl" style="left:254px"></div>
<div class="c" style="left:197px;width:55px">buy limit</div>
<div class="vl" style="left:299px"></div>
<div class="c" style="left:254px;width:43px">4.00</div>
<div class="vl" style="left:356px"></div>
<div class="c" style="left:299px;width:55px">eurusd</div>
<div class="vl" style="left:413px"></div>
<div class="c" style="left:356px;width:55px">1.3446</div>
<div class="vl" style="left:470px"></div>
<div class="c" style="left:413px;width:55px">0.0000</div>
<div class="vl" style="left:527px"></div>
<div class="c" style="left:470px;width:55px">1.3540</div>
<div class="vl" style="left:652px"></div>
<div class="c" style="left:527px;width:123px">2010.02.18 19:34</div>
<div class="vl" style="left:709px"></div>
<div class="c" style="left:652px;width:55px">1.3586</div>
<div class="vl" style="left:766px"></div>
<div class="vl" style="left:828px"></div>
<div class="c" style="left:828px;width:173px">cancelled</div>
</div>
<div class="row w" style="top:225px">
<svg class="a" style="left:3px;top:2px" width="15" height="16" viewBox="0 0 15 16"><defs><linearGradient id="dg" x1="0" y1="0" x2="1" y2="1"><stop offset="0" stop-color="#fff"/><stop offset="1" stop-color="#dcdcdc"/></linearGradient></defs><path d="M1.5 .5h7l3 3v9.5a.8 .8 0 0 1 -.8 .8h-9.2a.8 .8 0 0 1 -.8 -.8v-11.7a.8 .8 0 0 1 .8 -.8z" fill="url(#dg)" stroke="#555"/><path d="M8.5 .8v2.7h2.7" fill="none" stroke="#555"/><circle cx="10.5" cy="11.5" r="3.4" fill="#c06000" stroke="#802000" stroke-width="0.9"/><circle cx="9.8" cy="10.6" r="1.5" fill="#f0a030" opacity="0.8"/></svg>
<div class="c" style="left:24px;text-align:left">763933</div>
<div class="vl" style="left:72px"></div>
<div class="vl" style="left:197px"></div>
<div class="c" style="left:72px;width:123px">2010.02.18 18:15</div>
<div class="vl" style="left:254px"></div>
<div class="c" style="left:197px;width:55px">sell limit</div>
<div class="vl" style="left:299px"></div>
<div class="c" style="left:254px;width:43px">0.40</div>
<div class="vl" style="left:356px"></div>
<div class="c" style="left:299px;width:55px">eurusd</div>
<div class="vl" style="left:413px"></div>
<div class="c" style="left:356px;width:55px">1.3726</div>
<div class="vl" style="left:470px"></div>
<div class="c" style="left:413px;width:55px">0.0000</div>
<div class="vl" style="left:527px"></div>
<div class="c" style="left:470px;width:55px">1.3626</div>
<div class="vl" style="left:652px"></div>
<div class="c" style="left:527px;width:123px">2010.02.18 19:34</div>
<div class="vl" style="left:709px"></div>
<div class="c" style="left:652px;width:55px">1.3584</div>
<div class="vl" style="left:766px"></div>
<div class="vl" style="left:828px"></div>
<div class="c" style="left:828px;width:173px">cancelled</div>
</div>
<div class="row g" style="top:245px">
<svg class="a" style="left:3px;top:2px" width="15" height="16" viewBox="0 0 15 16"><defs><linearGradient id="dg" x1="0" y1="0" x2="1" y2="1"><stop offset="0" stop-color="#fff"/><stop offset="1" stop-color="#dcdcdc"/></linearGradient></defs><path d="M1.5 .5h7l3 3v9.5a.8 .8 0 0 1 -.8 .8h-9.2a.8 .8 0 0 1 -.8 -.8v-11.7a.8 .8 0 0 1 .8 -.8z" fill="url(#dg)" stroke="#555"/><path d="M8.5 .8v2.7h2.7" fill="none" stroke="#555"/><circle cx="10.5" cy="11.5" r="3.4" fill="#2a7ad8" stroke="#10408a" stroke-width="0.9"/><circle cx="9.8" cy="10.6" r="1.5" fill="#8cc8f8" opacity="0.8"/></svg>
<div class="c" style="left:24px;text-align:left">761251</div>
<div class="vl" style="left:72px"></div>
<div class="vl" style="left:197px"></div>
<div class="c" style="left:72px;width:123px">2010.02.18 05:32</div>
<div class="vl" style="left:254px"></div>
<div class="c" style="left:197px;width:55px">buy limit</div>
<div class="vl" style="left:299px"></div>
<div class="c" style="left:254px;width:43px">1.60</div>
<div class="vl" style="left:356px"></div>
<div class="c" style="left:299px;width:55px">gbpjpy</div>
<div class="vl" style="left:413px"></div>
<div class="c" style="left:356px;width:55px">138.22</div>
<div class="vl" style="left:470px"></div>
<div class="c" style="left:413px;width:55px">0.00</div>
<div class="vl" style="left:527px"></div>
<div class="c" style="left:470px;width:55px">139.30</div>
<div class="vl" style="left:652px"></div>
<div class="c" style="left:527px;width:123px">2010.02.18 19:34</div>
<div class="vl" style="left:709px"></div>
<div class="c" style="left:652px;width:55px">142.64</div>
<div class="vl" style="left:766px"></div>
<div class="vl" style="left:828px"></div>
<div class="c" style="left:828px;width:173px">cancelled</div>
</div>
<div class="row w" style="top:265px">
<svg class="a" style="left:3px;top:2px" width="15" height="16" viewBox="0 0 15 16"><defs><linearGradient id="dg" x1="0" y1="0" x2="1" y2="1"><stop offset="0" stop-color="#fff"/><stop offset="1" stop-color="#dcdcdc"/></linearGradient></defs><path d="M1.5 .5h7l3 3v9.5a.8 .8 0 0 1 -.8 .8h-9.2a.8 .8 0 0 1 -.8 -.8v-11.7a.8 .8 0 0 1 .8 -.8z" fill="url(#dg)" stroke="#555"/><path d="M8.5 .8v2.7h2.7" fill="none" stroke="#555"/><circle cx="10.5" cy="11.5" r="3.4" fill="#2a7ad8" stroke="#10408a" stroke-width="0.9"/><circle cx="9.8" cy="10.6" r="1.5" fill="#8cc8f8" opacity="0.8"/></svg>
<div class="c" style="left:24px;text-align:left">761249</div>
<div class="vl" style="left:72px"></div>
<div class="vl" style="left:197px"></div>
<div class="c" style="left:72px;width:123px">2010.02.18 05:30</div>
<div class="vl" style="left:254px"></div>
<div class="c" style="left:197px;width:55px">buy limit</div>
<div class="vl" style="left:299px"></div>
<div class="c" style="left:254px;width:43px">0.80</div>
<div class="vl" style="left:356px"></div>
<div class="c" style="left:299px;width:55px">gbpjpy</div>
<div class="vl" style="left:413px"></div>
<div class="c" style="left:356px;width:55px">139.30</div>
<div class="vl" style="left:470px"></div>
<div class="c" style="left:413px;width:55px">0.00</div>
<div class="vl" style="left:527px"></div>
<div class="c" style="left:470px;width:55px">140.38</div>
<div class="vl" style="left:652px"></div>
<div class="c" style="left:527px;width:123px">2010.02.18 19:34</div>
<div class="vl" style="left:709px"></div>
<div class="c" style="left:652px;width:55px">142.64</div>
<div class="vl" style="left:766px"></div>
<div class="vl" style="left:828px"></div>
<div class="c" style="left:828px;width:173px">cancelled</div>
</div>
<div class="row g" style="top:285px">
<svg class="a" style="left:3px;top:2px" width="15" height="16" viewBox="0 0 15 16"><defs><linearGradient id="dg" x1="0" y1="0" x2="1" y2="1"><stop offset="0" stop-color="#fff"/><stop offset="1" stop-color="#dcdcdc"/></linearGradient></defs><path d="M1.5 .5h7l3 3v9.5a.8 .8 0 0 1 -.8 .8h-9.2a.8 .8 0 0 1 -.8 -.8v-11.7a.8 .8 0 0 1 .8 -.8z" fill="url(#dg)" stroke="#555"/><path d="M8.5 .8v2.7h2.7" fill="none" stroke="#555"/><circle cx="10.5" cy="11.5" r="3.4" fill="#2a7ad8" stroke="#10408a" stroke-width="0.9"/><circle cx="9.8" cy="10.6" r="1.5" fill="#8cc8f8" opacity="0.8"/></svg>
<div class="c" style="left:24px;text-align:left">761247</div>
<div class="vl" style="left:72px"></div>
<div class="vl" style="left:197px"></div>
<div class="c" style="left:72px;width:123px">2010.02.18 05:29</div>
<div class="vl" style="left:254px"></div>
<div class="c" style="left:197px;width:55px">buy limit</div>
<div class="vl" style="left:299px"></div>
<div class="c" style="left:254px;width:43px">0.40</div>
<div class="vl" style="left:356px"></div>
<div class="c" style="left:299px;width:55px">gbpjpy</div>
<div class="vl" style="left:413px"></div>
<div class="c" style="left:356px;width:55px">140.38</div>
<div class="vl" style="left:470px"></div>
<div class="c" style="left:413px;width:55px">0.00</div>
<div class="vl" style="left:527px"></div>
<div class="c" style="left:470px;width:55px">141.40</div>
<div class="vl" style="left:652px"></div>
<div class="c" style="left:527px;width:123px">2010.02.18 19:34</div>
<div class="vl" style="left:709px"></div>
<div class="c" style="left:652px;width:55px">142.65</div>
<div class="vl" style="left:766px"></div>
<div class="vl" style="left:828px"></div>
<div class="c" style="left:828px;width:173px">cancelled</div>
</div>
<div class="row w" style="top:305px">
<svg class="a" style="left:3px;top:2px" width="15" height="16" viewBox="0 0 15 16"><defs><linearGradient id="dg" x1="0" y1="0" x2="1" y2="1"><stop offset="0" stop-color="#fff"/><stop offset="1" stop-color="#dcdcdc"/></linearGradient></defs><path d="M1.5 .5h7l3 3v9.5a.8 .8 0 0 1 -.8 .8h-9.2a.8 .8 0 0 1 -.8 -.8v-11.7a.8 .8 0 0 1 .8 -.8z" fill="url(#dg)" stroke="#555"/><path d="M8.5 .8v2.7h2.7" fill="none" stroke="#555"/><circle cx="10.5" cy="11.5" r="3.4" fill="#c06000" stroke="#802000" stroke-width="0.9"/><circle cx="9.8" cy="10.6" r="1.5" fill="#f0a030" opacity="0.8"/></svg>
<div class="c" style="left:24px;text-align:left">761235</div>
<div class="vl" style="left:72px"></div>
<div class="vl" style="left:197px"></div>
<div class="c" style="left:72px;width:123px">2010.02.18 05:07</div>
<div class="vl" style="left:254px"></div>
<div class="c" style="left:197px;width:55px">sell limit</div>
<div class="vl" style="left:299px"></div>
<div class="c" style="left:254px;width:43px">0.80</div>
<div class="vl" style="left:356px"></div>
<div class="c" style="left:299px;width:55px">gbpjpy</div>
<div class="vl" style="left:413px"></div>
<div class="c" style="left:356px;width:55px">144.47</div>
<div class="vl" style="left:470px"></div>
<div class="c" style="left:413px;width:55px">0.00</div>
<div class="vl" style="left:527px"></div>
<div class="c" style="left:470px;width:55px">143.47</div>
<div class="vl" style="left:652px"></div>
<div class="c" style="left:527px;width:123px">2010.02.18 19:34</div>
<div class="vl" style="left:709px"></div>
<div class="c" style="left:652px;width:55px">142.58</div>
<div class="vl" style="left:766px"></div>
<div class="vl" style="left:828px"></div>
<div class="c" style="left:828px;width:173px">cancelled</div>
</div>
<div class="row g" style="top:325px">
<svg class="a" style="left:3px;top:2px" width="15" height="16" viewBox="0 0 15 16"><defs><linearGradient id="dg" x1="0" y1="0" x2="1" y2="1"><stop offset="0" stop-color="#fff"/><stop offset="1" stop-color="#dcdcdc"/></linearGradient></defs><path d="M1.5 .5h7l3 3v9.5a.8 .8 0 0 1 -.8 .8h-9.2a.8 .8 0 0 1 -.8 -.8v-11.7a.8 .8 0 0 1 .8 -.8z" fill="url(#dg)" stroke="#555"/><path d="M8.5 .8v2.7h2.7" fill="none" stroke="#555"/><circle cx="10.5" cy="11.5" r="3.4" fill="#c06000" stroke="#802000" stroke-width="0.9"/><circle cx="9.8" cy="10.6" r="1.5" fill="#f0a030" opacity="0.8"/></svg>
<div class="c" style="left:24px;text-align:left">758413</div>
<div class="vl" style="left:72px"></div>
<div class="vl" style="left:197px"></div>
<div class="c" style="left:72px;width:123px">2010.02.17 21:27</div>
<div class="vl" style="left:254px"></div>
<div class="c" style="left:197px;width:55px">sell limit</div>
<div class="vl" style="left:299px"></div>
<div class="c" style="left:254px;width:43px">0.40</div>
<div class="vl" style="left:356px"></div>
<div class="c" style="left:299px;width:55px">gbpjpy</div>
<div class="vl" style="left:413px"></div>
<div class="c" style="left:356px;width:55px">143.50</div>
<div class="vl" style="left:470px"></div>
<div class="c" style="left:413px;width:55px">0.00</div>
<div class="vl" style="left:527px"></div>
<div class="c" style="left:470px;width:55px">142.47</div>
<div class="vl" style="left:652px"></div>
<div class="c" style="left:527px;width:123px">2010.02.18 19:34</div>
<div class="vl" style="left:709px"></div>
<div class="c" style="left:652px;width:55px">142.60</div>
<div class="vl" style="left:766px"></div>
<div class="vl" style="left:828px"></div>
<div class="c" style="left:828px;width:173px">cancelled</div>
</div>
<div class="row w" style="top:345px">
<svg class="a" style="left:3px;top:2px" width="15" height="16" viewBox="0 0 15 16"><defs><linearGradient id="dg" x1="0" y1="0" x2="1" y2="1"><stop offset="0" stop-color="#fff"/><stop offset="1" stop-color="#dcdcdc"/></linearGradient></defs><path d="M1.5 .5h7l3 3v9.5a.8 .8 0 0 1 -.8 .8h-9.2a.8 .8 0 0 1 -.8 -.8v-11.7a.8 .8 0 0 1 .8 -.8z" fill="url(#dg)" stroke="#555"/><path d="M8.5 .8v2.7h2.7" fill="none" stroke="#555"/><circle cx="10.5" cy="11.5" r="3.4" fill="#2a7ad8" stroke="#10408a" stroke-width="0.9"/><circle cx="9.8" cy="10.6" r="1.5" fill="#8cc8f8" opacity="0.8"/></svg>
<div class="c" style="left:24px;text-align:left">764547</div>
<div class="vl" style="left:72px"></div>
<div class="vl" style="left:197px"></div>
<div class="c" style="left:72px;width:123px">2010.02.18 19:40</div>
<div class="vl" style="left:254px"></div>
<div class="c" style="left:197px;width:55px">buy limit</div>
<div class="vl" style="left:299px"></div>
<div class="c" style="left:254px;width:43px">4.00</div>
<div class="vl" style="left:356px"></div>
<div class="c" style="left:299px;width:55px">gbpjpy</div>
<div class="vl" style="left:413px"></div>
<div class="c" style="left:356px;width:55px">141.53</div>
<div class="vl" style="left:470px"></div>
<div class="c" style="left:413px;width:55px">0.00</div>
<div class="vl" style="left:527px"></div>
<div class="c" style="left:470px;width:55px">142.53</div>
<div class="vl" style="left:652px"></div>
<div class="c" style="left:527px;width:123px">2010.02.18 19:43</div>
<div class="vl" style="left:709px"></div>
<div class="c" style="left:652px;width:55px">142.55</div>
<div class="vl" style="left:766px"></div>
<div class="vl" style="left:828px"></div>
<div class="c" style="left:828px;width:173px">cancelled</div>
</div>
<div class="row g" style="top:365px">
<svg class="a" style="left:3px;top:2px" width="15" height="16" viewBox="0 0 15 16"><defs><linearGradient id="dg" x1="0" y1="0" x2="1" y2="1"><stop offset="0" stop-color="#fff"/><stop offset="1" stop-color="#dcdcdc"/></linearGradient></defs><path d="M1.5 .5h7l3 3v9.5a.8 .8 0 0 1 -.8 .8h-9.2a.8 .8 0 0 1 -.8 -.8v-11.7a.8 .8 0 0 1 .8 -.8z" fill="url(#dg)" stroke="#555"/><path d="M8.5 .8v2.7h2.7" fill="none" stroke="#555"/><circle cx="10.5" cy="11.5" r="3.4" fill="#c06000" stroke="#802000" stroke-width="0.9"/><circle cx="9.8" cy="10.6" r="1.5" fill="#f0a030" opacity="0.8"/></svg>
<div class="c" style="left:24px;text-align:left">764541</div>
<div class="vl" style="left:72px"></div>
<div class="vl" style="left:197px"></div>
<div class="c" style="left:72px;width:123px">2010.02.18 19:39</div>
<div class="vl" style="left:254px"></div>
<div class="c" style="left:197px;width:55px">sell stop</div>
<div class="vl" style="left:299px"></div>
<div class="c" style="left:254px;width:43px">0.20</div>
<div class="vl" style="left:356px"></div>
<div class="c" style="left:299px;width:55px">gbpjpy</div>
<div class="vl" style="left:413px"></div>
<div class="c" style="left:356px;width:55px">141.60</div>
<div class="vl" style="left:470px"></div>
<div class="c" style="left:413px;width:55px">0.00</div>
<div class="vl" style="left:527px"></div>
<div class="c" style="left:470px;width:55px">140.60</div>
<div class="vl" style="left:652px"></div>
<div class="c" style="left:527px;width:123px">2010.02.19 03:15</div>
<div class="vl" style="left:709px"></div>
<div class="c" style="left:652px;width:55px">141.77</div>
<div class="vl" style="left:766px"></div>
<div class="vl" style="left:828px"></div>
<div class="c" style="left:828px;width:173px">cancelled</div>
</div>
<div class="row w" style="top:385px">
<svg class="a" style="left:3px;top:2px" width="15" height="16" viewBox="0 0 15 16"><defs><linearGradient id="dg" x1="0" y1="0" x2="1" y2="1"><stop offset="0" stop-color="#fff"/><stop offset="1" stop-color="#dcdcdc"/></linearGradient></defs><path d="M1.5 .5h7l3 3v9.5a.8 .8 0 0 1 -.8 .8h-9.2a.8 .8 0 0 1 -.8 -.8v-11.7a.8 .8 0 0 1 .8 -.8z" fill="url(#dg)" stroke="#555"/><path d="M8.5 .8v2.7h2.7" fill="none" stroke="#555"/><circle cx="10.5" cy="11.5" r="3.4" fill="#2a7ad8" stroke="#10408a" stroke-width="0.9"/><circle cx="9.8" cy="10.6" r="1.5" fill="#8cc8f8" opacity="0.8"/></svg>
<div class="c" style="left:24px;text-align:left">764530</div>
<div class="vl" style="left:72px"></div>
<div class="vl" style="left:197px"></div>
<div class="c" style="left:72px;width:123px">2010.02.18 19:37</div>
<div class="vl" style="left:254px"></div>
<div class="c" style="left:197px;width:55px">buy stop</div>
<div class="vl" style="left:299px"></div>
<div class="c" style="left:254px;width:43px">0.20</div>
<div class="vl" style="left:356px"></div>
<div class="c" style="left:299px;width:55px">gbpjpy</div>
<div class="vl" style="left:413px"></div>
<div class="c" style="left:356px;width:55px">143.53</div>
<div class="vl" style="left:470px"></div>
<div class="c" style="left:413px;width:55px">0.00</div>
<div class="vl" style="left:527px"></div>
<div class="c" style="left:470px;width:55px">144.53</div>
<div class="vl" style="left:652px"></div>
<div class="c" style="left:527px;width:123px">2010.02.19 03:15</div>
<div class="vl" style="left:709px"></div>
<div class="c" style="left:652px;width:55px">141.84</div>
<div class="vl" style="left:766px"></div>
<div class="vl" style="left:828px"></div>
<div class="c" style="left:828px;width:173px">cancelled</div>
</div>
<div class="row g" style="top:405px">
<svg class="a" style="left:3px;top:2px" width="15" height="16" viewBox="0 0 15 16"><defs><linearGradient id="dg" x1="0" y1="0" x2="1" y2="1"><stop offset="0" stop-color="#fff"/><stop offset="1" stop-color="#dcdcdc"/></linearGradient></defs><path d="M1.5 .5h7l3 3v9.5a.8 .8 0 0 1 -.8 .8h-9.2a.8 .8 0 0 1 -.8 -.8v-11.7a.8 .8 0 0 1 .8 -.8z" fill="url(#dg)" stroke="#555"/><path d="M8.5 .8v2.7h2.7" fill="none" stroke="#555"/><circle cx="10.5" cy="11.5" r="3.4" fill="#c06000" stroke="#802000" stroke-width="0.9"/><circle cx="9.8" cy="10.6" r="1.5" fill="#f0a030" opacity="0.8"/></svg>
<div class="c" style="left:24px;text-align:left">764511</div>
<div class="vl" style="left:72px"></div>
<div class="vl" style="left:197px"></div>
<div class="c" style="left:72px;width:123px">2010.02.18 19:31</div>
<div class="vl" style="left:254px"></div>
<div class="c" style="left:197px;width:55px">sell</div>
<div class="vl" style="left:299px"></div>
<div class="c" style="left:254px;width:43px">0.20</div>
<div class="vl" style="left:356px"></div>
<div class="c" style="left:299px;width:55px">gbpjpy</div>
<div class="vl" style="left:413px"></div>
<div class="c" style="left:356px;width:55px">142.60</div>
<div class="vl" style="left:470px"></div>
<div class="c" style="left:413px;width:55px">0.00</div>
<div class="grn" style="left:472px;width:55px"></div>
<div class="vl" style="left:527px"></div>
<div class="c" style="left:470px;width:55px">141.60</div>
<div class="vl" style="left:652px"></div>
<div class="c" style="left:527px;width:123px">2010.02.19 04:17</div>
<div class="vl" style="left:709px"></div>
<div class="c" style="left:652px;width:55px">141.60</div>
<div class="vl" style="left:766px"></div>
<div class="c" style="left:709px;width:55px">0.00</div>
<div class="vl" style="left:828px"></div>
<div class="c" style="left:766px;width:60px">217.73</div>
<div class="c" style="left:828px;width:173px">[tp]</div>
</div>
<div class="sum" style="top:424px"><div class="sic"></div><span class="st" style="left:24px;letter-spacing:-0.06px">Profit/Loss: 1,345.68&nbsp; Credit: 0.00&nbsp; Deposit: 5,000.00&nbsp; Withdrawal: 0.00</span><span class="st" style="left:767px;width:60px;text-align:right">6,345.68</span></div>
</div>
<!-- bottom tabs -->
<div class="a" style="left:23px;top:691px;width:1005px;height:20px;background:#f0f0f0;border-top:1px solid #000"></div>
<div class="vline" style="left:23px;top:691px;height:20px;background:#a0a0a0"></div>
<div class="a" style="left:74px;top:691px;width:96px;height:18px;background:#fff;border:1px solid #000;border-top:none;border-right-width:2px;border-bottom-width:2px"></div>
<div class="t" style="left:35px;top:695px;color:#74808f">Trade</div>
<div class="t" style="left:83px;top:694px">Account History</div>
<div class="t" style="left:179px;top:695px;color:#74808f">News</div>
<div class="vline" style="left:216px;top:695px;height:12px;background:#606060"></div>
<div class="t" style="left:226px;top:695px;color:#74808f">Alerts</div>
<div class="vline" style="left:263px;top:695px;height:12px;background:#606060"></div>
<div class="t" style="left:273px;top:695px;color:#74808f">Mailbox</div>
<div class="vline" style="left:320px;top:695px;height:12px;background:#606060"></div>
<div class="t" style="left:331px;top:695px;color:#74808f">Journal</div>
<div class="vline" style="left:374px;top:695px;height:12px;background:#606060"></div>
<div class="vline" style="left:1029px;top:141px;height:571px;background:#fff"></div>
<div class="hl" style="left:22px;top:711px;width:1008px;background:#fff"></div>
<!-- status bar -->
<div class="hl" style="left:8px;top:714px;width:1024px;background:#a0a0a0"></div>
<div class="hl" style="left:8px;top:715px;width:1024px;background:#fff"></div>
<div class="t" style="left:10px;top:721px">For Help, press F1</div>
<div class="t" style="left:312px;top:721px">Default</div>
<div class="t" style="left:428px;top:721px">2010.02.17 09:00</div>
<div class="t" style="left:530px;top:721px">O: 142.47</div>
<div class="t" style="left:601px;top:721px">H: 142.52</div>
<div class="t" style="left:672px;top:721px">L: 142.29</div>
<div class="t" style="left:740px;top:721px">C: 142.40</div>
<div class="t" style="left:810px;top:721px">V: 426</div>
<div class="t" style="left:944px;top:721px">292/0 kb</div>
<svg class="a" style="left:0;top:716px" width="1040" height="20"><g fill="#a0a0a0" shape-rendering="crispEdges">
<rect x="306" y="3" width="1" height="17"/><rect x="422" y="3" width="1" height="17"/><rect x="524" y="3" width="1" height="17"/><rect x="595" y="3" width="1" height="17"/><rect x="666" y="3" width="1" height="17"/><rect x="734" y="3" width="1" height="17"/><rect x="804" y="3" width="1" height="17"/><rect x="870" y="3" width="1" height="17"/>
<rect x="307" y="3" width="1" height="17" fill="#fff"/><rect x="423" y="3" width="1" height="17" fill="#fff"/><rect x="525" y="3" width="1" height="17" fill="#fff"/><rect x="596" y="3" width="1" height="17" fill="#fff"/><rect x="667" y="3" width="1" height="17" fill="#fff"/><rect x="735" y="3" width="1" height="17" fill="#fff"/><rect x="805" y="3" width="1" height="17" fill="#fff"/><rect x="871" y="3" width="1" height="17" fill="#fff"/>
</g>
<g shape-rendering="crispEdges">
<rect x="876" y="6" width="2" height="10" fill="#5a8a10"/><rect x="879" y="6" width="2" height="10" fill="#5a8a10"/><rect x="882" y="6" width="2" height="10" fill="#5a8a10"/><rect x="885" y="6" width="2" height="10" fill="#5a8a10"/><rect x="888" y="6" width="2" height="10" fill="#5a8a10"/><rect x="891" y="6" width="2" height="10" fill="#5a8a10"/><rect x="894" y="6" width="2" height="10" fill="#5a8a10"/><rect x="897" y="6" width="2" height="10" fill="#5a8a10"/>
<rect x="876" y="14" width="2" height="2" fill="#b01818"/><rect x="879" y="13" width="2" height="3" fill="#b01818"/><rect x="882" y="12" width="2" height="4" fill="#b01818"/><rect x="885" y="11" width="2" height="5" fill="#b01818"/><rect x="888" y="10" width="2" height="6" fill="#b01818"/><rect x="891" y="9" width="2" height="7" fill="#b01818"/><rect x="894" y="8" width="2" height="8" fill="#b01818"/><rect x="897" y="7" width="2" height="9" fill="#b01818"/>
</g></svg>
<div class="vline" style="left:1031px;top:28px;height:708px;background:#fff"></div>

</body></html>
